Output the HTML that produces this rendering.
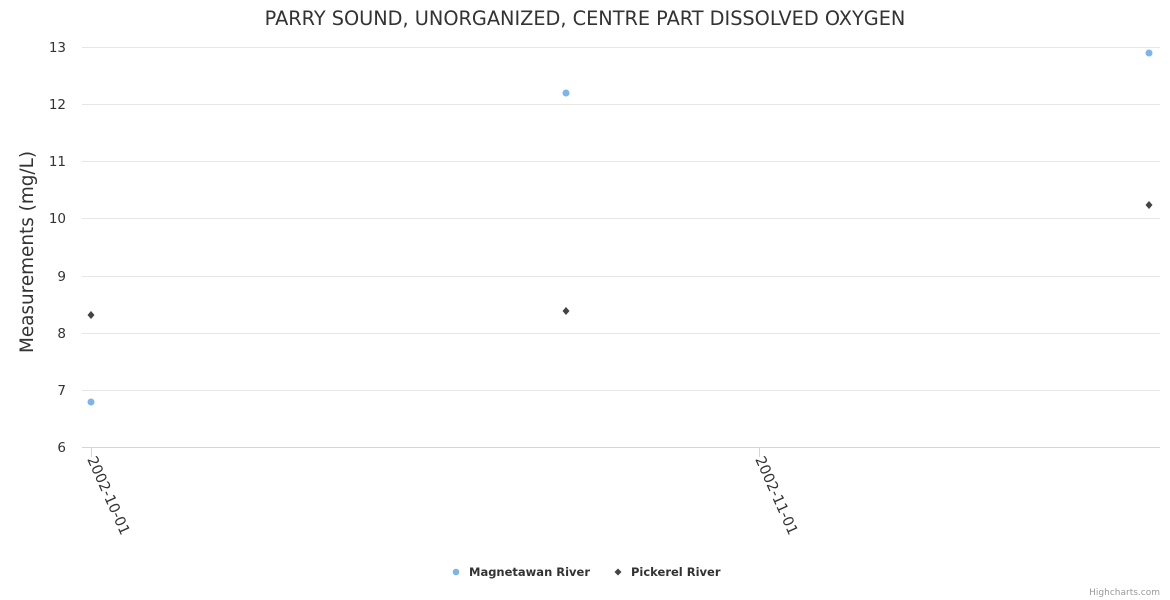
<!DOCTYPE html>
<html><head><meta charset="utf-8"><style>html,body{margin:0;padding:0;background:#fff}svg{display:block;font-family:"DejaVu Sans","Liberation Sans",sans-serif}</style></head>
<body>
<svg width="1170" height="600" xmlns="http://www.w3.org/2000/svg">
<rect width="1170" height="600" fill="#fff"/>
<text x="585" y="25" text-anchor="middle" font-size="19.3" fill="#333">PARRY SOUND, UNORGANIZED, CENTRE PART DISSOLVED OXYGEN</text>
<g stroke="#e6e6e6" stroke-width="1">
<line x1="82" x2="1160" y1="47.5" y2="47.5"/>
<line x1="82" x2="1160" y1="104.5" y2="104.5"/>
<line x1="82" x2="1160" y1="161.5" y2="161.5"/>
<line x1="82" x2="1160" y1="218.5" y2="218.5"/>
<line x1="82" x2="1160" y1="276.5" y2="276.5"/>
<line x1="82" x2="1160" y1="333.5" y2="333.5"/>
<line x1="82" x2="1160" y1="390.5" y2="390.5"/>
</g>
<line x1="82" x2="1160" y1="447.5" y2="447.5" stroke="#ccd6eb"/>
<line x1="91.5" x2="91.5" y1="447" y2="457" stroke="#ccd6eb"/>
<line x1="759.5" x2="759.5" y1="447" y2="457" stroke="#ccd6eb"/>
<g font-size="13.5" fill="#333" text-anchor="end">
<text x="66" y="52">13</text><text x="66" y="109">12</text><text x="66" y="166">11</text><text x="66" y="223">10</text>
<text x="66" y="281">9</text><text x="66" y="338">8</text><text x="66" y="395">7</text><text x="66" y="452">6</text>
</g>
<text transform="translate(33,252) rotate(-90)" text-anchor="middle" font-size="18.4" fill="#333">Measurements (mg/L)</text>
<g font-size="14.5" fill="#333">
<text transform="translate(87,459) rotate(66)">2002-10-01</text>
<text transform="translate(755,459) rotate(66)">2002-11-01</text>
</g>
<g fill="#7cb5ec">
<circle cx="91" cy="402" r="3.5"/><circle cx="566" cy="93" r="3.5"/><circle cx="1149" cy="53" r="3.5"/>
</g>
<g fill="#434348">
<path d="M91 311l3.5 4-3.5 4-3.5-4z"/><path d="M566 307l3.5 4-3.5 4-3.5-4z"/><path d="M1149 201l3.5 4-3.5 4-3.5-4z"/>
</g>
<circle cx="456" cy="572" r="3.3" fill="#7cb5ec"/>
<text x="469" y="576" font-size="11.5" font-weight="bold" fill="#333">Magnetawan River</text>
<path d="M618 568.5l3.5 3.5-3.5 3.5-3.5-3.5z" fill="#434348"/>
<text x="631" y="576" font-size="11.5" font-weight="bold" fill="#333">Pickerel River</text>
<text x="1160" y="595" text-anchor="end" font-size="9" fill="#999">Highcharts.com</text>
</svg>
</body></html>
